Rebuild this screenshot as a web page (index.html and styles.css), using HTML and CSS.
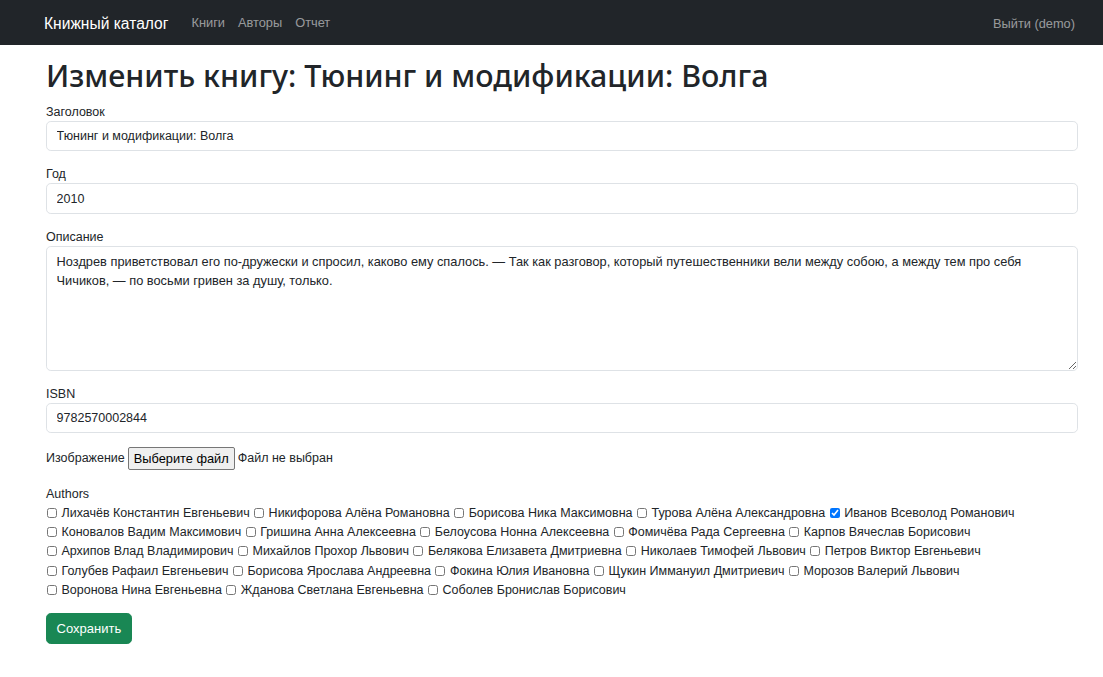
FILE: index.html
```html
<!DOCTYPE html>
<html lang="ru">
<head>
<meta charset="utf-8">
<title>Изменить книгу</title>
<link rel="stylesheet" href="styles.css">
</head>
<body>
<nav class="navbar">
  <div class="nav-inner">
    <a class="brand" href="#">Книжный каталог</a>
    <ul class="nav-links">
      <li><a href="#">Книги</a></li>
      <li><a href="#">Авторы</a></li>
      <li><a href="#">Отчет</a></li>
    </ul>
    <a class="logout" href="#">Выйти (demo)</a>
  </div>
</nav>
<main class="container">
  <h1>Изменить книгу: Тюнинг и модификации: Волга</h1>
  <form>
    <div class="group">
      <label>Заголовок</label>
      <input class="control" type="text" value="Тюнинг и модификации: Волга">
    </div>
    <div class="group">
      <label>Год</label>
      <input class="control" type="text" value="2010">
    </div>
    <div class="group">
      <label>Описание</label>
      <textarea class="control area">Ноздрев приветствовал его по-дружески и спросил, каково ему спалось. — Так как разговор, который путешественники вели между собою, а между тем про себя Чичиков, — по восьми гривен за душу, только.</textarea>
    </div>
    <div class="group">
      <label>ISBN</label>
      <input class="control" type="text" value="9782570002844">
    </div>
    <div class="group file-row">
      <label>Изображение</label>
      <button type="button" class="file-btn">Выберите файл</button>
      <span>Файл не выбран</span>
    </div>
    <div class="group">
      <label>Authors</label>
      <div class="authors">
        <label class="author"><input type="checkbox"> Лихачёв Константин Евгеньевич</label>
        <label class="author"><input type="checkbox"> Никифорова Алёна Романовна</label>
        <label class="author"><input type="checkbox"> Борисова Ника Максимовна</label>
        <label class="author"><input type="checkbox"> Турова Алёна Александровна</label>
        <label class="author"><input type="checkbox" checked> Иванов Всеволод Романович</label>
        <label class="author"><input type="checkbox"> Коновалов Вадим Максимович</label>
        <label class="author"><input type="checkbox"> Гришина Анна Алексеевна</label>
        <label class="author"><input type="checkbox"> Белоусова Нонна Алексеевна</label>
        <label class="author"><input type="checkbox"> Фомичёва Рада Сергеевна</label>
        <label class="author"><input type="checkbox"> Карпов Вячеслав Борисович</label>
        <label class="author"><input type="checkbox"> Архипов Влад Владимирович</label>
        <label class="author"><input type="checkbox"> Михайлов Прохор Львович</label>
        <label class="author"><input type="checkbox"> Белякова Елизавета Дмитриевна</label>
        <label class="author"><input type="checkbox"> Николаев Тимофей Львович</label>
        <label class="author"><input type="checkbox"> Петров Виктор Евгеньевич</label>
        <label class="author"><input type="checkbox"> Голубев Рафаил Евгеньевич</label>
        <label class="author"><input type="checkbox"> Борисова Ярослава Андреевна</label>
        <label class="author"><input type="checkbox"> Фокина Юлия Ивановна</label>
        <label class="author"><input type="checkbox"> Щукин Иммануил Дмитриевич</label>
        <label class="author"><input type="checkbox"> Морозов Валерий Львович</label>
        <label class="author"><input type="checkbox"> Воронова Нина Евгеньевна</label>
        <label class="author"><input type="checkbox"> Жданова Светлана Евгеньевна</label>
        <label class="author"><input type="checkbox"> Соболев Бронислав Борисович</label>
      </div>
    </div>
    <button type="submit" class="btn-save">Сохранить</button>
  </form>
</main>
</body>
</html>
```
FILE: styles.css
```css
* { box-sizing: border-box; }
html, body { margin: 0; padding: 0; }
body {
  font-family: "Liberation Sans", Arial, sans-serif;
  font-size: 12.5px;
  line-height: 19.2px;
  color: #212529;
  background: #fff;
}
a { text-decoration: none; }
.navbar {
  background: #212529;
  height: 45px;
}
.nav-inner {
  height: 100%;
  display: flex;
  align-items: center;
  padding: 2px 28px 0 44px;
}
.brand {
  color: #fff;
  font-size: 15.6px;
  margin-right: 23px;
}
.nav-links {
  list-style: none;
  display: flex;
  gap: 13px;
  margin: 0;
  padding: 0;
  flex: 1;
}
.nav-links a, .logout {
  color: rgba(255,255,255,0.55);
  font-size: 12.8px;
}
.container {
  padding: 12px 25px 0 46px;
}
h1 {
  font-family: "Noto Sans", "Liberation Sans", sans-serif;
  font-size: 30.4px;
  font-weight: 500;
  line-height: 38.4px;
  margin: 0 0 6.4px;
}
.group {
  margin-bottom: 12.8px;
}
.group > label {
  display: block;
  padding-top: 1px;
  height: 19.2px;
}
.file-row > label {
  display: inline;
  padding-top: 0;
  height: auto;
}
.control {
  display: block;
  width: 100%;
  height: 30.4px;
  padding: 4.8px 9.6px;
  font: inherit;
  color: #212529;
  border: 1px solid #dee2e6;
  border-radius: 4.8px;
  background: #fff;
}
.area {
  height: 125px;
  font-size: 12.8px;
  resize: vertical;
}
.file-row {
  display: flex;
  align-items: center;
  gap: 3px;
  height: 25px;
  padding-top: 1px;
}
.file-btn {
  font: inherit;
  font-size: 12.8px;
  height: 23px;
  padding: 0 5px;
  background: #efefef;
  border: 1px solid #767676;
  border-radius: 2px;
  color: #000;
}
.authors {
  display: block;
  padding-top: 1px;
}
.author {
  white-space: nowrap;
}
.author input {
  width: 10px;
  height: 10px;
  margin: 0 1px 0 1px;
  vertical-align: -1px;
}
.btn-save {
  font: inherit;
  font-size: 13px;
  color: #fff;
  background: #198754;
  border: 1px solid #198754;
  border-radius: 4.8px;
  padding: 4.8px 9.6px;
  height: 31px;
}
```
